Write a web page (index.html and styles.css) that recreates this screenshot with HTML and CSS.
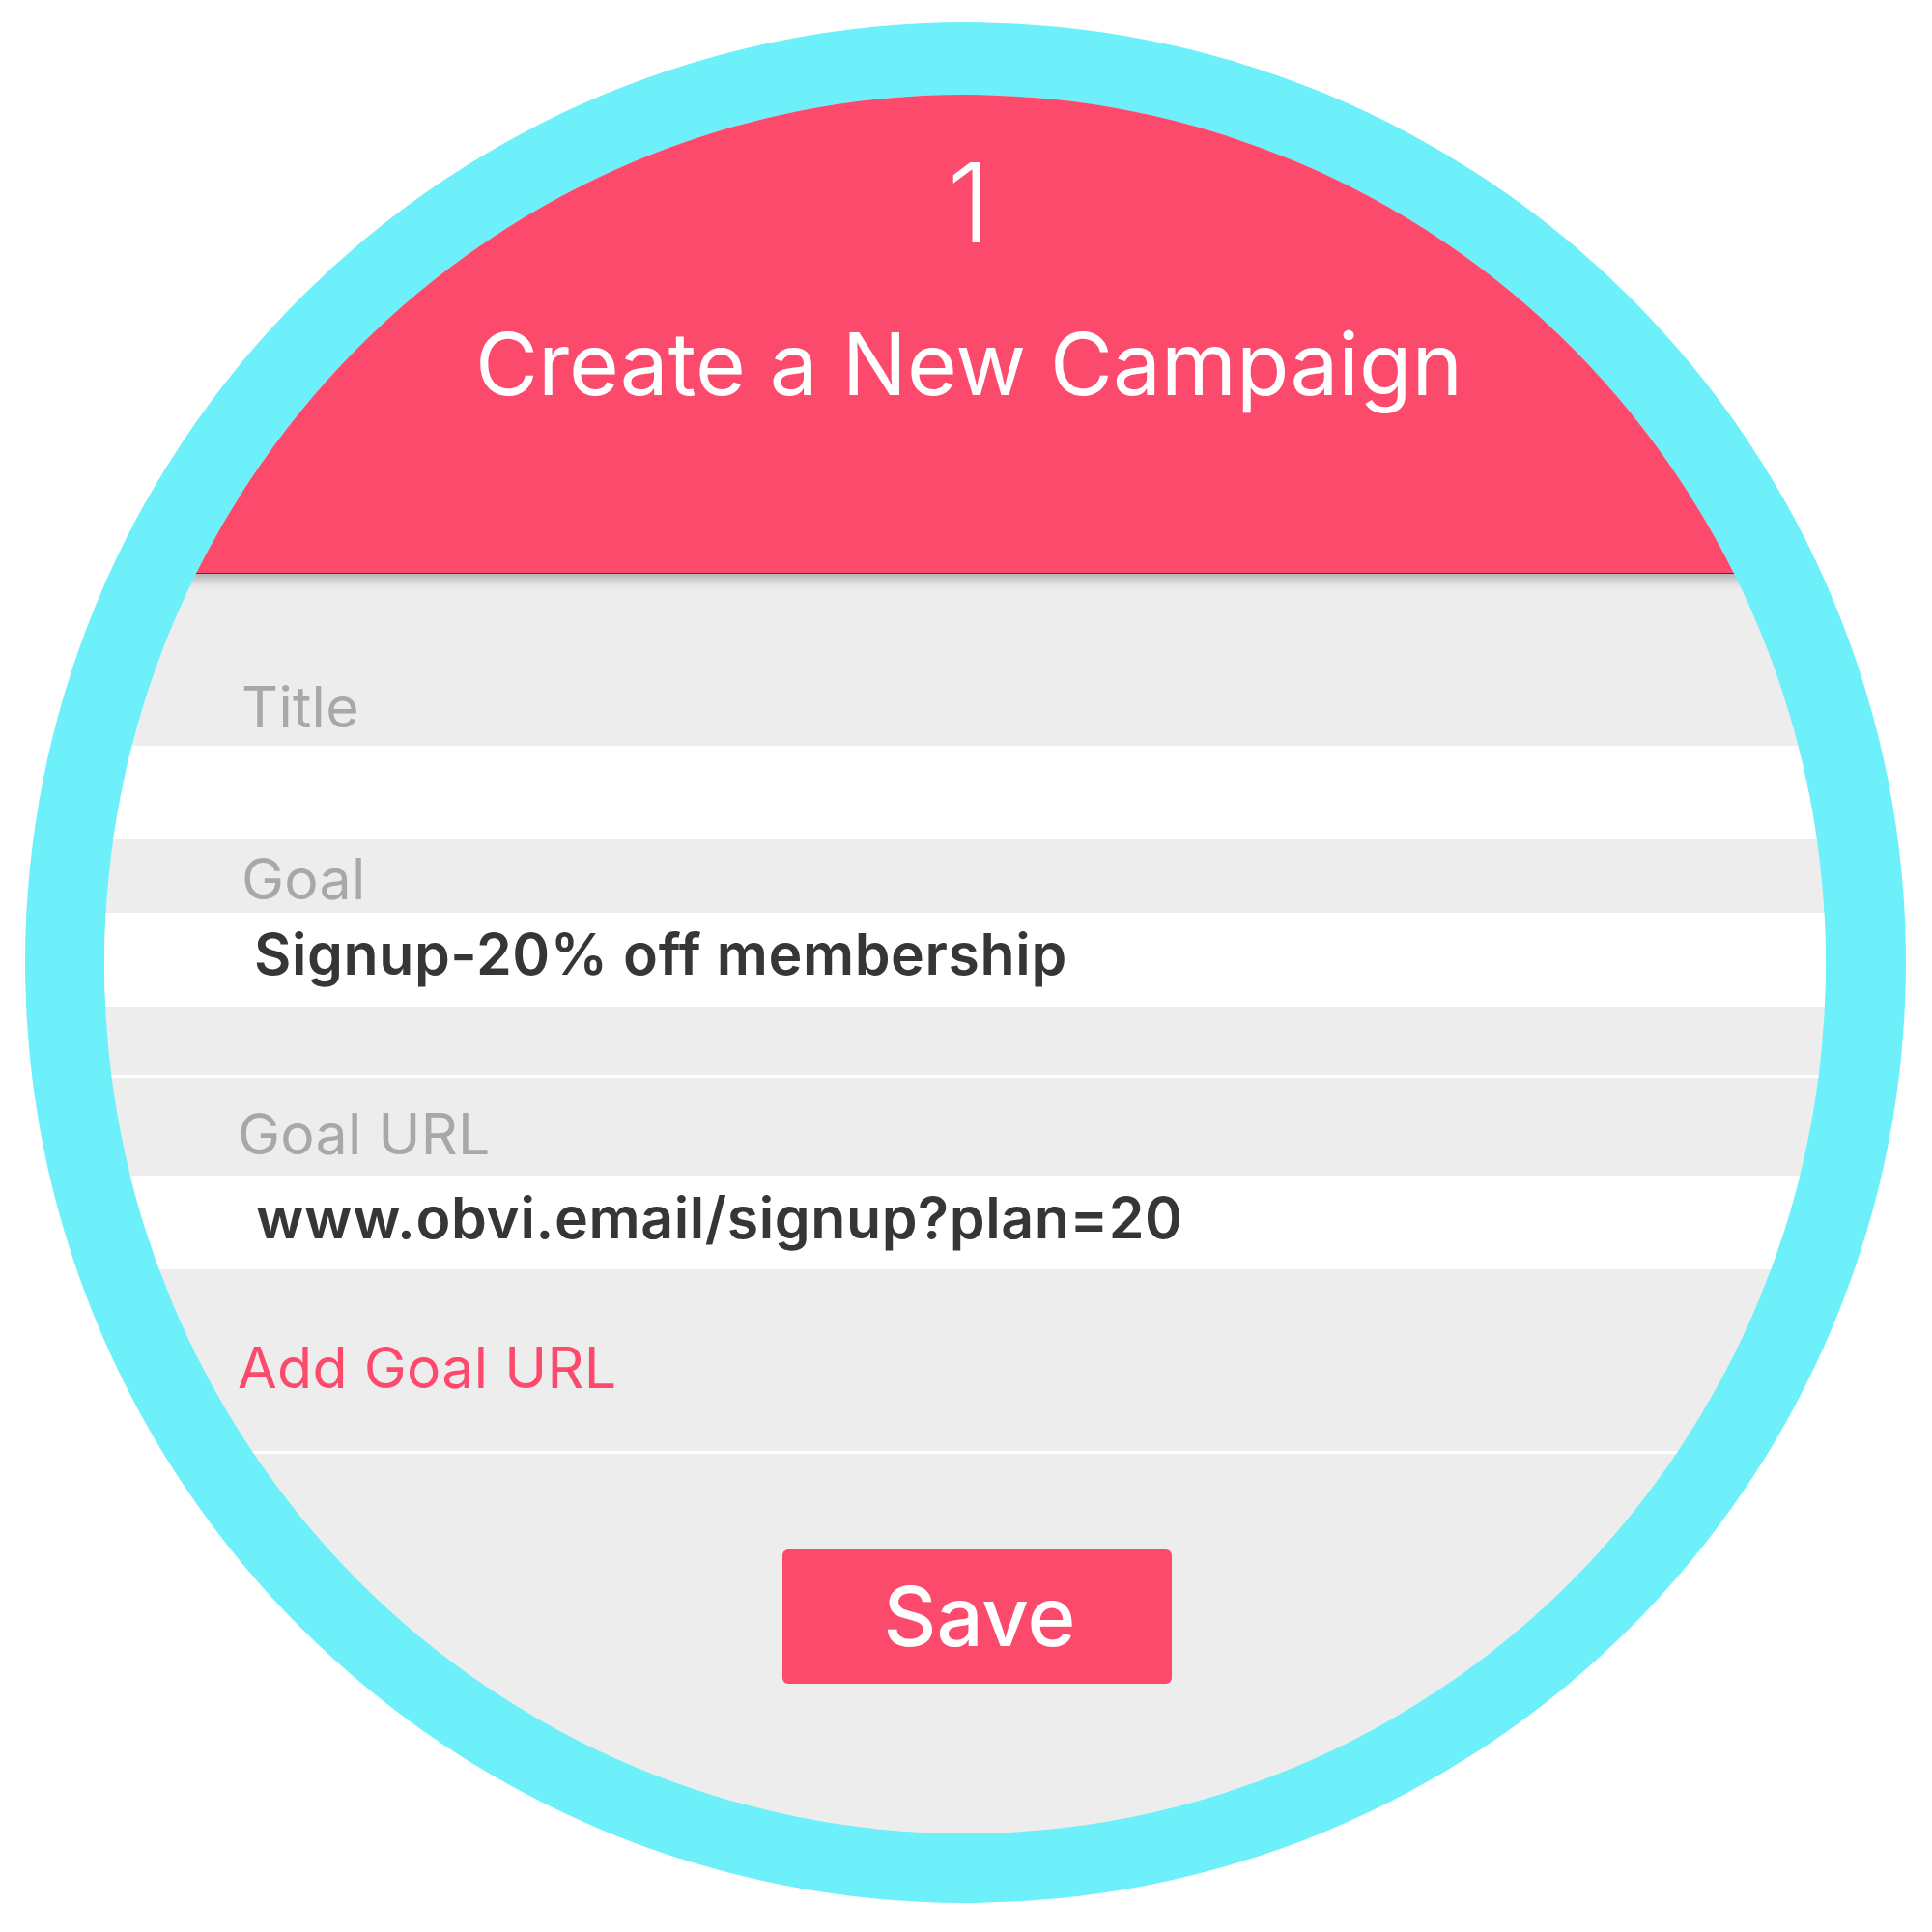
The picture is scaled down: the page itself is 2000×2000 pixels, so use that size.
FILE: index.html
```html
<!DOCTYPE html>
<html>
<head>
<meta charset="utf-8">
<link rel="stylesheet" href="styles.css">
</head>
<body>
<div class="ring">
  <div class="face">
    <header class="header">
      <div class="step">1</div>
      <h1 class="title">Create a New Campaign</h1>
    </header>
    <div class="label label-title">Title</div>
    <div class="input"></div>
    <div class="label label-goal">Goal</div>
    <div class="input value value-goal">Signup-20% off membership</div>
    <div class="gap"></div>
    <div class="sep"></div>
    <div class="label label-url">Goal URL</div>
    <div class="input value value-url">www.obvi.email/signup?plan=20</div>
    <div class="add">Add Goal URL</div>
    <div class="sep"></div>
    <div class="actions"><div class="save">Save</div></div>
  </div>
</div>
</body>
</html>
```
FILE: styles.css
```css
html, body {
  margin: 0;
  padding: 0;
  background: #ffffff;
}
body {
  font-family: Inter, "Noto Sans", sans-serif;
}
.ring {
  margin-left: 26px;
  margin-top: 23px;
  width: 1947px;
  height: 1947px;
  box-sizing: border-box;
  padding: 75px 0 0 82px;
  border-radius: 50%;
  background: #6DF0F9;
}
.face {
  width: 1782px;
  height: 1800px;
  border-radius: 50%;
  overflow: hidden;
  background: #EDEDED;
}
.header {
  position: relative;
  z-index: 1;
  height: 496px;
  box-sizing: border-box;
  padding: 55px 0 0 8px;
  background: #FC4A6C;
  border-bottom: 1px solid #3c3c3c;
  box-shadow: 0 5px 12px rgba(0, 0, 0, 0.3);
  color: #ffffff;
  text-align: center;
}
.step {
  font-size: 114px;
  line-height: 114px;
  font-weight: 300;
}
.title {
  margin: 65px 0 0 0;
  font-size: 89px;
  line-height: 90px;
  font-weight: 400;
}
.label {
  font-size: 59px;
  line-height: 60px;
  color: #A8A8A8;
  padding-left: 142px;
  letter-spacing: 0.3px;
}
.label-title {
  padding-top: 108px;
  height: 70px;
}
.label-goal {
  padding-top: 11px;
  height: 65px;
}
.label-url {
  padding-top: 28px;
  height: 73px;
  padding-left: 138px;
}
.input {
  background: #ffffff;
  height: 97px;
  box-sizing: border-box;
}
.value {
  font-size: 59px;
  line-height: 60px;
  font-weight: 600;
  color: #363636;
  padding-left: 155px;
  letter-spacing: 0.6px;
}
.value-goal {
  padding-top: 13px;
}
.value-url {
  padding-top: 14px;
  padding-left: 157px;
}
.gap {
  height: 71px;
}
.sep {
  height: 3px;
  background: #ffffff;
}
.add {
  font-size: 59px;
  line-height: 60px;
  letter-spacing: 0.3px;
  color: #FC4A6C;
  padding: 72px 0 0 138px;
  height: 116px;
}
.actions {
  display: flex;
  justify-content: center;
  padding: 99px 0 0 25px;
}
.save {
  width: 403px;
  height: 139px;
  border-radius: 6px;
  background: #FC4A6C;
  color: #ffffff;
  font-size: 85px;
  line-height: 1;
  font-weight: 500;
  display: flex;
  align-items: center;
  justify-content: center;
  padding-left: 5px;
  box-sizing: border-box;
}
```
